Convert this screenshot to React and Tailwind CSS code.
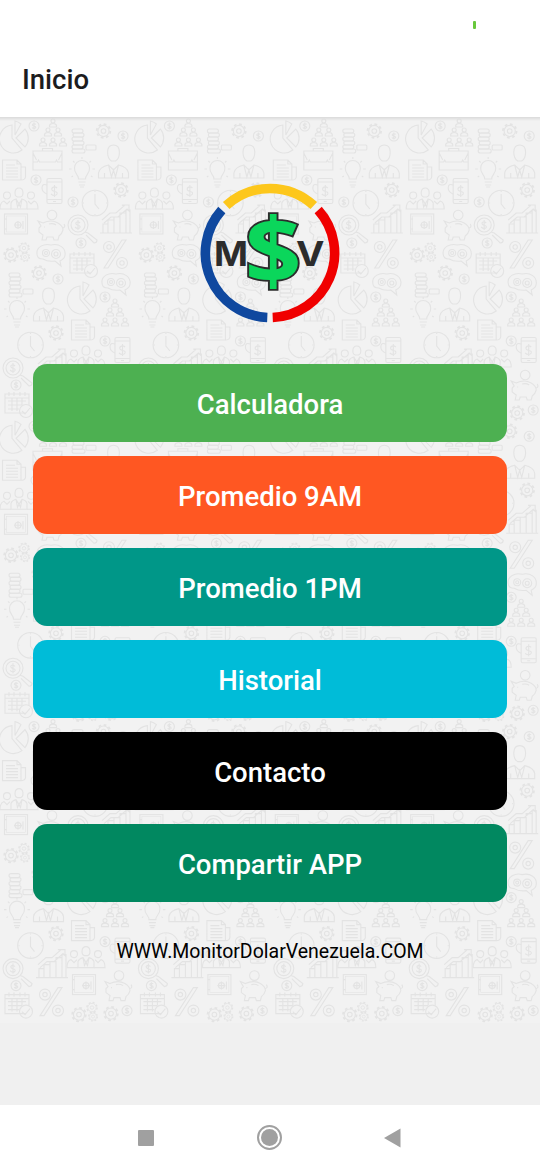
import React from 'react';

const buttons = [
  { label: 'Calculadora', color: 'bg-[#4db051]' },
  { label: 'Promedio 9AM', color: 'bg-[#ff5722]' },
  { label: 'Promedio 1PM', color: 'bg-[#009788]' },
  { label: 'Historial', color: 'bg-[#00bcd8]' },
  { label: 'Contacto', color: 'bg-black' },
  { label: 'Compartir APP', color: 'bg-[#018860]' },
];

// Every doodle is drawn around its own center
const Coin = () => (
  <>
    <circle r="5" />
    <path d="M1.8 -1.6C.8 -2.8 -1.8 -2.4 -1.6 -.9C-1.4 .3 1.8 -.2 1.8 1.4C1.6 2.8 -1 2.7 -1.8 1.5M0 -3.4V3.4" />
  </>
);

const Pie = () => (
  <>
    <path d="M-2 -13A14 14 0 1 0 8 12L-2 0Z" />
    <path d="M1 -3V-17A14 14 0 0 1 7 -14Z" />
    <path d="M2 0L11 -9A14 14 0 0 1 11 9Z" />
  </>
);

const Pyramid = () => (
  <>
    {[[0, -11], [-5, -2], [5, -2], [-10, 8], [0, 8], [10, 8]].map(([x, y]) => (
      <g key={`${x}${y}`} transform={`translate(${x} ${y})`}>
        <circle r="2" />
        <path d="M-3.5 6V4.5Q-3 2.5 0 2.5T3.5 4.5V6Z" />
      </g>
    ))}
  </>
);

const Briefcase = () => (
  <path d="M-14.5 -8H14.5V11H-14.5ZM-5 -8V-10.5H5V-8M-14.5 3H-10L-9 1L-8 3H8L9 1L10 3H14.5M-14.5 -6L-11 1M14.5 -6L11 1" />
);

const Stack = () => (
  <>
    {[-11, -7, -3, 1, 5].map((y, i) => (
      <rect key={y} x={-12 + (i % 2)} y={y} width="11" height="4" rx="2" />
    ))}
    <rect x="-12" y="9" width="13" height="4" rx="2" />
    <rect x="2" y="5" width="10" height="5" rx="1" />
  </>
);

const Gear = () => (
  <>
    <circle r="5.6" />
    <circle r="6.8" strokeWidth="1.8" strokeDasharray="2.7 2.64" />
    <circle r="2.3" />
  </>
);

const Man = () => (
  <path d="M0 -18C-8 -18 -7 -5 -2 -2H2C7 -5 8 -18 0 -18ZM-15 15V10Q-14 4 -5 2L0 7L5 2Q14 4 15 10V15ZM-5 2L-2 14L0 7L2 14L5 2M-9 10V15M9 10V15" />
);

const Doc = () => (
  <path d="M-11.5 -10H3L7 -6V10H-11.5ZM3 -10V-6H7M7 -3H11.5V7Q11 10 7 10M-8 -5H1M-8 -2H4M-8 1H4M-8 4H4M-8 7H4" />
);

const Bulb = () => (
  <path d="M-3.5 7C-3 3 -8 2 -7.5 -4A7.5 7.5 0 0 1 7.5 -4C8 2 3 3 3.5 7ZM-3.5 10H3.5M-3 13H3M-2 15H2M0 -15V-13M-9 -11L-7.5 -9.5M9 -11L7.5 -9.5M-13 -3H-10.5M13 -3H10.5M-10.5 5L-9 4M10.5 5L9 4" />
);

const Phone = () => (
  <>
    <rect x="-7" y="-12.5" width="15" height="25" rx="1.5" />
    <path d="M-7 -9H8M-7 8.5H8M-7 -6Q-12 -8 -12 -3Q-12 1 -7 3M3 -3C1 -5 -3 -4 -2 -1C-1 1 4 0 3 3C2 5 -1 5 -3 3M.5 -6V6M-1 10.5H2" />
  </>
);

const Clock = () => (
  <>
    <circle r="12.8" />
    <path d="M0 -9V1L4 6M0 -12V-11M0 11V12M-12 0H-11M11 0H12" />
  </>
);

const Team = () => (
  <>
    <path d="M0 -10C-5 -10 -5 -2 -1.5 -1H1.5C5 -2 5 -10 0 -10ZM-8 11V5Q-7 2 -3 1L0 6L3 1Q7 2 8 5V11ZM-3 1L-1.5 9L0 6L1.5 9L3 1" />
    <circle cx="-12" cy="-2.5" r="3.5" />
    <circle cx="12" cy="-2.5" r="3.5" />
    <path d="M-9 3L-12 6L-15 3Q-19 4 -19 11H-8M9 3L12 6L15 3Q19 4 19 11H8" />
  </>
);

const Safe = () => (
  <>
    <rect x="-11.5" y="-10" width="23" height="20" />
    <rect x="-9.5" y="-8" width="19" height="16" strokeWidth=".6" />
    <circle cx="2" cy="1" r="3" />
    <path d="M7 -3V5M-11.5 -5H-9.5M-11.5 5H-9.5M2 -3V5M-2 1H6" />
  </>
);

const Pig = () => (
  <>
    <circle cx="1" cy="-10" r="4.8" />
    <path d="M-13 -4L-8 -2Q0 -6 7 -2Q12 1 12 5Q11 9 8 11L7 15H3L2 12H-4L-5 15H-9L-8 10L-12 7V3L-10 1ZM12 3Q15 2 13 -1M-7 2H-6M-2 -1Q2 -2 5 0" />
  </>
);

const Magnifier = () => (
  <>
    <circle r="10" />
    <circle r="7" />
    <path d="M2 -2C0 -4 -3 -3 -2 -1C-1 1 3 0 2 2.5C1 4 -1 4 -3 2M0 -5V5M7 7L10 8L19 15Q19 18 16 18L8 10" />
  </>
);

const Chart = () => (
  <path d="M-16 14H16M-13 14V5H-8V14M-8 14V1H-2V14M-2 14V-2H4V14M4 14V-6H10V14M10 14V-9H14V14M-14 1L-6 -6H0L8 -13L6 -14H13V-8L11 -10L2 -2H-5L-12 4" />
);

const Gears = () => (
  <>
    <g transform="translate(-6 3)"><Gear /></g>
    <g transform="translate(7 -4) scale(.75)"><Gear /></g>
    <g transform="translate(8 5) scale(.65)"><Gear /></g>
  </>
);

const Brain = () => (
  <>
    <path d="M-14 0C-15 -7 -7 -11 0 -9C8 -11 15 -6 14 1C14 4 11 6 9 7L10 12L4 7Q-3 8 -8 5Q-14 5 -14 0Z" />
    <circle cx="-5" cy="-1" r="3.5" />
    <circle cx="5" cy="0" r="4.5" />
    <circle cx="-5" cy="-1" r="1.5" />
    <circle cx="5" cy="0" r="2" />
  </>
);

const Calendar = () => (
  <>
    <path d="M8 9H-13V-10H11V1M-13 -6H11M-9 -12V-8M-4 -12V-8M2 -12V-8M7 -12V-8M-10 -3H8M-10 1H4M-10 5H1M-6 -6V7M-1 -6V7M4 -6V1" />
    <circle cx="8" cy="7" r="6.5" />
    <path d="M4 7L7 10L12 4" />
  </>
);

const Percent = () => (
  <>
    <circle cx="-6" cy="-7" r="5.5" />
    <circle cx="-6" cy="-7" r="2.2" />
    <circle cx="7" cy="9" r="5.5" />
    <circle cx="7" cy="9" r="2.2" />
    <path d="M7 -14H11L-7 14H-11Z" />
  </>
);

const doodles = [
  [Pie, 14, 21], [Coin, 34, 9], [Pyramid, 53, 15], [Briefcase, 47.5, 42],
  [Stack, 84, 23], [Gear, 103.5, 14], [Coin, 123, 19], [Man, 113.5, 46],
  [Doc, 14, 53], [Bulb, 82, 55], [Coin, 36, 63], [Phone, 54, 74],
  [Gear, 121, 73], [Clock, 95, 86], [Coin, 73, 85], [Team, 19, 81],
  [Safe, 16, 107], [Pig, 51, 108], [Magnifier, 78, 108], [Chart, 116, 102],
  [Coin, 81, 126], [Percent, 115, 137], [Gears, 17, 135], [Brain, 51, 137],
  [Calendar, 83, 147], [Stack, 21, 167], [Gear, 39, 156], [Coin, 58, 162],
  [Brain, 116, 166], [Man, 48.5, 189], [Bulb, 17, 195], [Pie, 82, 182],
  [Coin, 105, 180], [Pyramid, 115, 195], [Doc, 83, 213], [Coin, 105, 224],
  [Gear, 56, 216], [Clock, 30.5, 228], [Phone, 122, 233], [Team, 86, 239],
  [Magnifier, 13, 251], [Chart, 52, 246], [Coin, 16, 268], [Safe, 84, 267],
  [Pig, 118, 268], [Calendar, 18, 287], [Percent, 51, 284], [Gears, 85, 294],
  [Gear, 111, 296], [Coin, 127, 293],
];

const Wallpaper = () => (
  <svg
    className="absolute top-0 left-0 bg-[#f2f2f2] pointer-events-none"
    width="540"
    height="906"
    viewBox="0 0 540 906"
    fill="none"
    stroke="#e3e3e3"
    strokeWidth="1.1"
  >
    <defs>
      <g id="tile">
        {doodles.map(([Doodle, x, y], idx) => (
          <g key={idx} transform={`translate(${x} ${y})`}>
            <Doodle />
          </g>
        ))}
      </g>
    </defs>
    {[0, 300.3, 600.6].map((y) =>
      [0, 135.4, 270.8, 406.2].map((x) => <use key={`${x}-${y}`} href="#tile" x={x} y={y} />)
    )}
  </svg>
);

const Logo = () => (
  <svg width="140" height="140" viewBox="-70 -70 140 140" aria-label="MSV">
    <g fill="none" strokeWidth="9.6">
      <path d="M-43.8 -47.4A64.5 64.5 0 0 1 43.8 -47.4" stroke="#fdc71c" />
      <path d="M-48.2 -43A64.5 64.5 0 0 0 -2.7 64.45" stroke="#0f489f" />
      <path d="M48.2 -43A64.5 64.5 0 0 1 2.7 64.45" stroke="#f00000" />
    </g>
    <g fontFamily="Inter, sans-serif" fontWeight="700" fill="#2c2c2c">
      <text x="-56" y="12.5" fontSize="34" textLength="34" lengthAdjust="spacingAndGlyphs">M</text>
      <text x="26" y="12.5" fontSize="34" textLength="28.5" lengthAdjust="spacingAndGlyphs">V</text>
    </g>
    <text
      transform="translate(3.2 30.5) scale(1.08 1)"
      textAnchor="middle"
      fontFamily="'Open Sans', sans-serif"
      fontWeight="700"
      fontSize="92"
      fill="#0bd65b"
      stroke="#2c2c2c"
      strokeWidth="3.6"
      paintOrder="stroke"
    >
      $
    </text>
  </svg>
);

const App = () => {
  return (
    <div className="flex h-[1170px] w-[540px] flex-col overflow-hidden bg-[#f0f0f0] font-['Roboto',sans-serif]">
      {/* Status bar and title */}
      <header className="flex h-[117px] flex-col bg-white">
        <div className="flex h-[42px] justify-end pt-[21px] pr-16">
          <span className="h-2 w-[3.5px] rounded-[1px] bg-[#68c83c]" />
        </div>
        <h1 className="pl-[22px] pt-[20px] text-[27.5px] leading-9 font-medium text-[#1c1c1e]">Inicio</h1>
      </header>

      {/* Content */}
      <main className="relative flex flex-1 flex-col items-center">
        <Wallpaper />
        <div className="absolute inset-x-0 top-0 h-1 bg-gradient-to-b from-[#dadada] to-transparent" />
        <div className="relative mt-[66px]">
          <Logo />
        </div>
        <div className="relative mt-[40.5px] flex w-[474px] flex-col gap-[13.5px]">
          {buttons.map((button) => (
            <button
              key={button.label}
              className={`h-[78.5px] rounded-[14px] pt-[3px] text-[27.5px] font-medium text-white ${button.color}`}
            >
              {button.label}
            </button>
          ))}
        </div>
        <p className="relative mt-[35.5px] text-[19.5px] leading-7 text-black">WWW.MonitorDolarVenezuela.COM</p>
      </main>

      {/* Android navigation */}
      <nav className="relative h-[65px] bg-white">
        <div className="flex h-full items-center justify-between pr-[139px] pl-[138px]">
          <span className="h-4 w-4 rounded-[1px] bg-[#a0a0a0]" />
          <span className="flex h-[25px] w-[25px] items-center justify-center rounded-full border-2 border-[#a0a0a0]">
            <span className="h-[17px] w-[17px] rounded-full bg-[#a0a0a0]" />
          </span>
          <svg width="17" height="20" viewBox="0 0 17 20" fill="#a0a0a0">
            <path d="M0 10L16.5 .5V19.5Z" />
          </svg>
        </div>
      </nav>
    </div>
  );
};

export default App;
